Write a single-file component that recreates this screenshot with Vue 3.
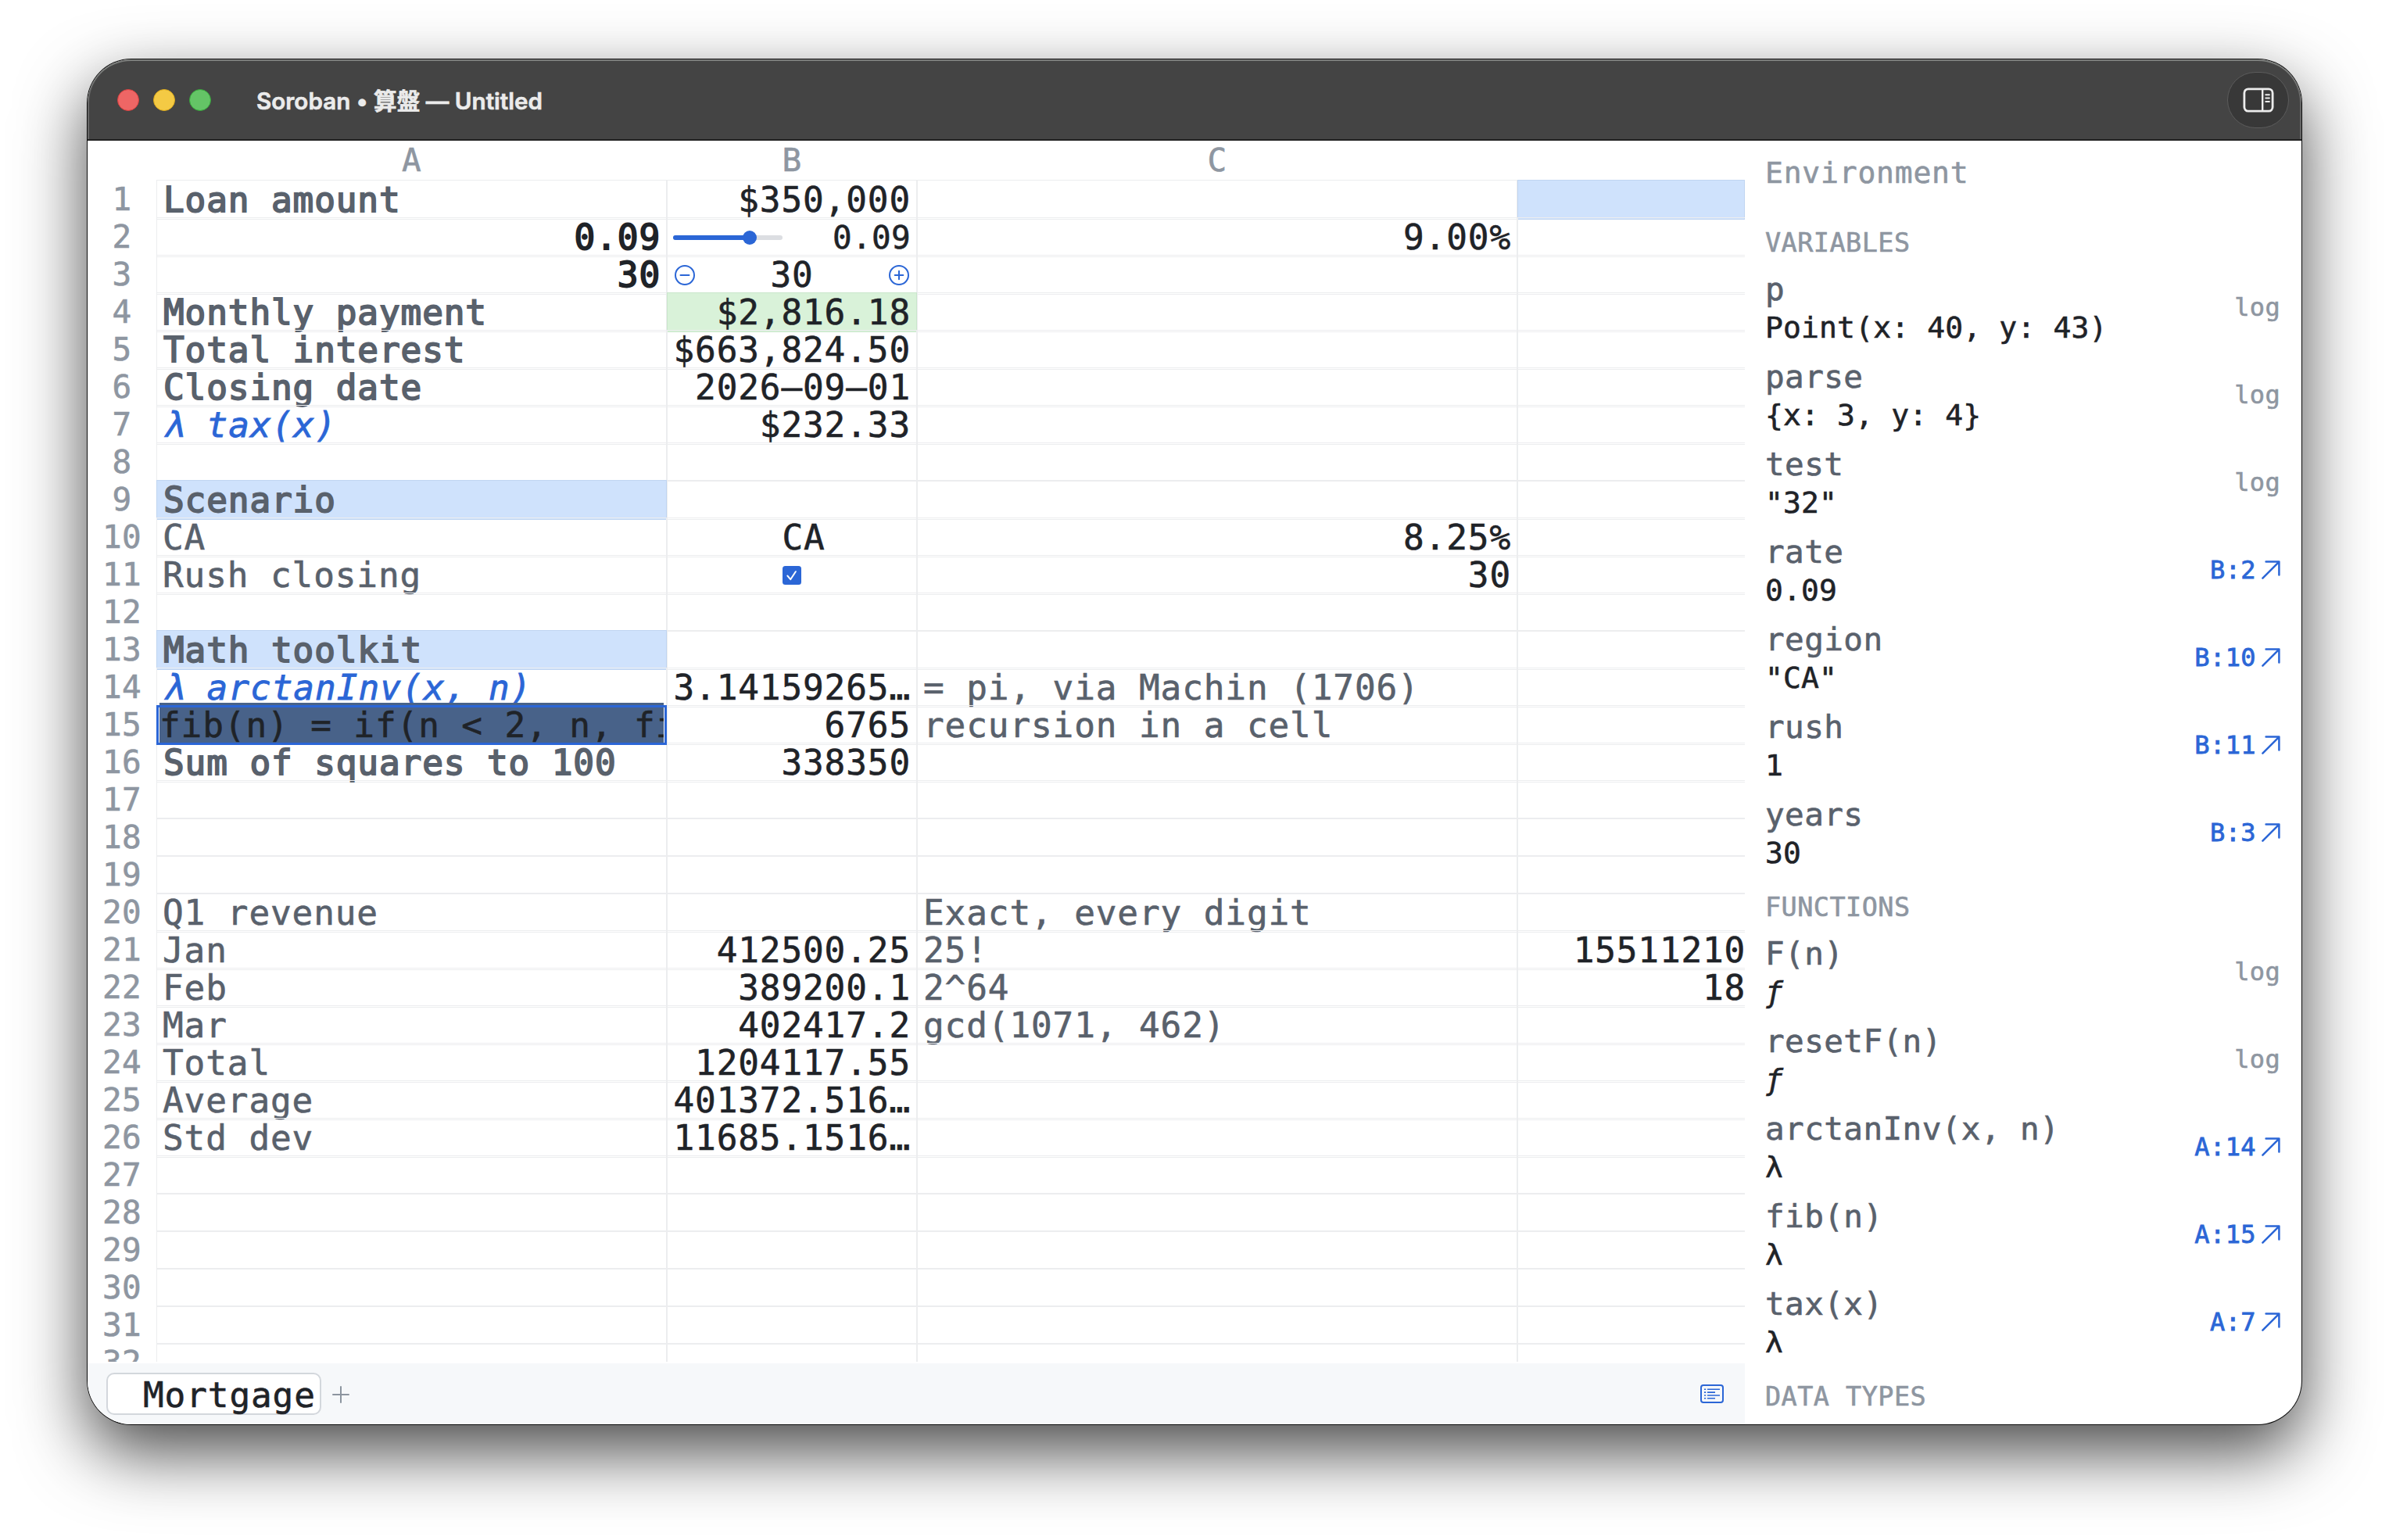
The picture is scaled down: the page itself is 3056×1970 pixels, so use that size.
<script setup>
const columns = ['A', 'B', 'C', 'D']
const headings = ['A', 'B', 'C']

const t = (text, ...mods) => ({ text, mods })

const content = {
  1: { A: t('Loan amount', 'label', 'strong'), B: t('$350,000', 'num'), D: t('', 'blue') },
  2: { A: t('0.09', 'num', 'strong'), B: { kind: 'slider', text: '0.09', value: 70, mods: [] }, C: t('9.00%', 'num') },
  3: { A: t('30', 'num', 'strong'), B: { kind: 'stepper', text: '30', mods: [] } },
  4: { A: t('Monthly payment', 'label', 'strong'), B: t('$2,816.18', 'num', 'green') },
  5: { A: t('Total interest', 'label', 'strong'), B: t('$663,824.50', 'num') },
  6: { A: t('Closing date', 'label', 'strong'), B: t('2026–09–01', 'num') },
  7: { A: t('λ tax(x)', 'lambda'), B: t('$232.33', 'num') },
  9: { A: t('Scenario', 'label', 'strong', 'blue') },
  10: { A: t('CA', 'label'), B: t('CA', 'choice'), C: t('8.25%', 'num') },
  11: { A: t('Rush closing', 'label'), B: { kind: 'checkbox', text: '', mods: [] }, C: t('30', 'num') },
  13: { A: t('Math toolkit', 'label', 'strong', 'blue') },
  14: { A: t('λ arctanInv(x, n)', 'lambda'), B: t('3.14159265…', 'num'), C: t('= pi, via Machin (1706)', 'label') },
  15: { A: { kind: 'editor', text: 'fib(n) = if(n < 2, n, fi', mods: [] }, B: t('6765', 'num'), C: t('recursion in a cell', 'label') },
  16: { A: t('Sum of squares to 100', 'label', 'strong'), B: t('338350', 'num') },
  20: { A: t('Q1 revenue', 'label'), C: t('Exact, every digit', 'label') },
  21: { A: t('Jan', 'label'), B: t('412500.25', 'num'), C: t('25!', 'label'), D: t('15511210', 'num') },
  22: { A: t('Feb', 'label'), B: t('389200.1', 'num'), C: t('2^64', 'label'), D: t('18', 'num') },
  23: { A: t('Mar', 'label'), B: t('402417.2', 'num'), C: t('gcd(1071, 462)', 'label') },
  24: { A: t('Total', 'label'), B: t('1204117.55', 'num') },
  25: { A: t('Average', 'label'), B: t('401372.516…', 'num') },
  26: { A: t('Std dev', 'label'), B: t('11685.1516…', 'num') },
}

const empty = { text: '', mods: [] }
const rows = Array.from({ length: 32 }, (_, i) => ({
  n: i + 1,
  cells: columns.map((c) => content[i + 1]?.[c] ?? empty),
}))

const sections = [
  {
    title: 'VARIABLES',
    items: [
      { name: 'p', value: 'Point(x: 40, y: 43)' },
      { name: 'parse', value: '{x: 3, y: 4}' },
      { name: 'test', value: '"32"' },
      { name: 'rate', value: '0.09', link: 'B:2' },
      { name: 'region', value: '"CA"', link: 'B:10' },
      { name: 'rush', value: '1', link: 'B:11' },
      { name: 'years', value: '30', link: 'B:3' },
    ],
  },
  {
    title: 'FUNCTIONS',
    items: [
      { name: 'F(n)', value: 'ƒ', builtin: true },
      { name: 'resetF(n)', value: 'ƒ', builtin: true },
      { name: 'arctanInv(x, n)', value: 'λ', link: 'A:14' },
      { name: 'fib(n)', value: 'λ', link: 'A:15' },
      { name: 'tax(x)', value: 'λ', link: 'A:7' },
    ],
  },
  { title: 'DATA TYPES', items: [] },
]
</script>

<template>
  <div class="desktop">
    <div class="window">
      <header class="titlebar">
        <div class="lights">
          <span class="light close"></span>
          <span class="light minimize"></span>
          <span class="light zoom"></span>
        </div>
        <h1 class="title">Soroban&nbsp;• 算盤 — Untitled</h1>
        <button class="toggle" aria-label="Toggle sidebar">
          <svg width="40" height="32" viewBox="0 0 40 32" fill="none" stroke="#ececec">
            <rect x="1.9" y="1.9" width="36.2" height="28.2" rx="5" stroke-width="2.8" />
            <path d="M25.2 2v28" stroke-width="2.4" />
            <path d="M29.3 9.2h4.6M29.3 13.6h4.6M29.3 18h4.6" stroke-width="2" stroke-linecap="round" />
          </svg>
        </button>
      </header>

      <div class="body">
        <main class="main">
          <div class="sheet">
            <div class="row head">
              <span class="corner"></span>
              <span v-for="c in headings" :key="c" class="colname">{{ c }}</span>
            </div>
            <div v-for="r in rows" :key="r.n" class="row">
              <span class="rownum">{{ r.n }}</span>
              <div v-for="(cell, i) in r.cells" :key="i" class="cell" :class="[cell.kind, ...cell.mods, { last: i === 3 }]">
                <template v-if="cell.kind === 'slider'">
                  <span class="track">
                    <span class="fill" :style="{ width: cell.value + '%' }"></span>
                    <span class="knob" :style="{ left: cell.value + '%' }"></span>
                  </span>
                  <span class="small">{{ cell.text }}</span>
                </template>
                <template v-else-if="cell.kind === 'stepper'">
                  <svg width="26" height="26" viewBox="0 0 26 26" fill="none" stroke="#2b66d6" stroke-width="2">
                    <circle cx="13" cy="13" r="12" />
                    <path d="M7.5 13h11" stroke-linecap="round" />
                  </svg>
                  <span>{{ cell.text }}</span>
                  <svg width="26" height="26" viewBox="0 0 26 26" fill="none" stroke="#2b66d6" stroke-width="2">
                    <circle cx="13" cy="13" r="12" />
                    <path d="M7.7 13h10.6M13 7.7v10.6" stroke-linecap="round" />
                  </svg>
                </template>
                <svg v-else-if="cell.kind === 'checkbox'" width="24" height="24" viewBox="0 0 24 24">
                  <rect width="24" height="24" rx="3.5" fill="#2b66d6" />
                  <path d="M6.4 12.6l3.8 4.6 6.6-10" fill="none" stroke="#fff" stroke-width="2" stroke-linecap="round" stroke-linejoin="round" />
                </svg>
                <span v-else-if="cell.kind === 'editor'" class="field">{{ cell.text }}</span>
                <template v-else>{{ cell.text }}</template>
              </div>
            </div>
          </div>

          <footer class="tabs">
            <div class="tab">Mortgage</div>
            <svg class="add" width="22" height="22" viewBox="0 0 22 22" stroke="#8c959f" stroke-width="2" stroke-linecap="round">
              <path d="M1 11h20M11 1v20" />
            </svg>
            <svg class="log-icon" width="30" height="24" viewBox="0 0 30 24" fill="none" stroke="#2b66d6">
              <rect x="1" y="1" width="28" height="22" rx="3" stroke-width="2" />
              <path d="M9 6.3h16M9 10.1h10M9 14h16M9 17.8h10" stroke-width="1.6" />
              <path d="M5 6.3h2.2M5 10.1h2.2M5 14h2.2M5 17.8h2.2" stroke-width="1.6" />
            </svg>
          </footer>
        </main>

        <aside class="panel">
          <h2 class="panel-title">Environment</h2>
          <section v-for="s in sections" :key="s.title" class="section">
            <h3 class="section-title">{{ s.title }}</h3>
            <div v-for="item in s.items" :key="item.name" class="item">
              <div class="entry">
                <div class="name">{{ item.name }}</div>
                <div class="value" :class="{ builtin: item.builtin }">{{ item.value }}</div>
              </div>
              <a v-if="item.link" class="link">
                {{ item.link }}
                <svg width="24" height="24" viewBox="0 0 24 24" fill="none" stroke="#2b66d6" stroke-width="2.5" stroke-linecap="round" stroke-linejoin="round">
                  <path d="M1.4 22.6L22.4 1.6M5.6 1.6h16.8v16.8" />
                </svg>
              </a>
              <span v-else class="log">log</span>
            </div>
          </section>
        </aside>
      </div>
    </div>
  </div>
</template>

<style>
body {
  background: #fff;
}
</style>

<style scoped>
.desktop {
  box-sizing: border-box;
  width: 3056px;
  height: 1970px;
  padding: 76px 112px 148px;
  overflow: hidden;
  background: #fff;
  font-family: "DejaVu Sans Mono", "Liberation Mono", monospace;
  -webkit-text-stroke: 0.6px currentColor;
}
.window {
  height: 1746px;
  display: flex;
  flex-direction: column;
  border-radius: 56px;
  overflow: hidden;
  background: #fff;
  box-shadow: 0 0 0 1px #0c0c0c, 0 35px 88px rgba(0, 0, 0, 0.72);
}
.titlebar {
  box-sizing: border-box;
  height: 104px;
  flex: none;
  display: flex;
  align-items: center;
  padding: 0 16px 0 38px;
  background: #444;
  border-bottom: 2px solid #222;
  border-radius: 56px 56px 0 0;
  box-shadow: inset 0 2px 0 #7c7e7c, inset 2px 0 0 #666, inset -2px 0 0 #666;
}
.lights {
  display: flex;
  gap: 18px;
  padding-top: 2px;
}
.light {
  box-sizing: border-box;
  width: 28px;
  height: 28px;
  border-radius: 50%;
}
.close {
  background: #ee6665;
  border: 1px solid #d8403f;
}
.minimize {
  background: #f4ca44;
  border: 1px solid #dba91c;
}
.zoom {
  background: #64c466;
  border: 1px solid #35a53a;
}
.title {
  margin: 0 auto 0 58px;
  padding-top: 3px;
  font: 600 29.6px/40px Inter, "Noto Sans CJK JP", sans-serif;
  color: #ebebeb;
  white-space: nowrap;
}
.toggle {
  box-sizing: border-box;
  width: 79px;
  height: 72px;
  padding: 0;
  margin-top: 2px;
  display: flex;
  align-items: center;
  justify-content: center;
  border: 1.5px solid #5c5c5c;
  border-radius: 36px;
  background: #383838;
}
.body {
  flex: 1;
  min-height: 0;
  display: flex;
}
.main {
  width: 2120px;
  flex: none;
  display: flex;
  flex-direction: column;
}
.sheet {
  height: 1562px;
  margin-bottom: 2px;
  overflow: hidden;
}
.row {
  display: grid;
  grid-template-columns: 88px 653px 320px 768px 291px;
  height: 48px;
}
.head {
  height: 50px;
}
.colname,
.rownum {
  font-size: 41px;
  line-height: 50px;
  letter-spacing: 0.3px;
  text-align: center;
  color: #8e96a1;
}
.cell {
  padding: 0 8px;
  font-size: 44.4px;
  line-height: 51px;
  letter-spacing: 0.87px;
  white-space: pre;
  color: #1f2328;
  box-shadow: inset 0 0 0 1px #ecedef;
}
.label {
  color: #59616c;
}
.strong {
  -webkit-text-stroke: 1.8px currentColor;
}
.label.strong {
  padding-left: 9px;
}
.num {
  text-align: right;
}
.last {
  padding-right: 0;
  box-shadow: inset 1px 1px 0 #ecedef, inset 0 -1px 0 #ecedef;
}
.last.num {
  margin-right: -1px;
  letter-spacing: 0.8px;
}
.lambda {
  padding-left: 9px;
  font-style: italic;
  letter-spacing: 1px;
  color: #2b66d6;
  -webkit-text-stroke: 0.8px currentColor;
}
.blue {
  background: #cfe2fc;
  box-shadow: inset 0 0 0 1px #c0d5f1;
}
.green {
  background: #d9f2d9;
  box-shadow: inset 0 0 0 1px #c9e6cb;
}
.choice {
  text-align: center;
  padding-left: 38px;
}
.slider,
.stepper {
  display: flex;
  align-items: center;
  justify-content: space-between;
}
.track {
  position: relative;
  width: 140px;
  height: 6px;
  border-radius: 3px;
  background: #dcdee2;
}
.fill {
  display: block;
  height: 6px;
  border-radius: 3px;
  background: #2b66d6;
}
.knob {
  position: absolute;
  top: -6px;
  width: 18px;
  height: 18px;
  margin-left: -9px;
  border-radius: 50%;
  background: #2b66d6;
}
.small {
  font-size: 41px;
  line-height: 48px;
  letter-spacing: 0.3px;
}
.stepper {
  padding: 0 10px;
}
.checkbox {
  display: flex;
  align-items: center;
  justify-content: center;
}
.editor {
  position: relative;
  padding: 0 4px;
}
.editor::after {
  content: "";
  position: absolute;
  inset: 0;
  border: 3px solid #2b66d6;
}
.field {
  display: block;
  height: 54px;
  margin-top: -3px;
  line-height: 57px;
  overflow: hidden;
  background: #486289;
}
.tabs {
  box-sizing: border-box;
  height: 78px;
  display: flex;
  align-items: center;
  padding: 0 27px 0 24px;
  background: #f6f8fa;
}
.tab {
  box-sizing: border-box;
  width: 275px;
  height: 54px;
  padding-left: 45px;
  border: 2px solid #d3d7dc;
  border-radius: 10px;
  background: #fff;
  font-size: 44.4px;
  line-height: 53px;
  letter-spacing: 0.87px;
  color: #1f2328;
}
.add {
  margin: 1px auto 0 14px;
}
.panel {
  flex: 1;
  padding: 16px 27px 0 26px;
  overflow: hidden;
}
.panel-title {
  margin: 0 0 25px;
  font-size: 38px;
  font-weight: 400;
  line-height: 50px;
  letter-spacing: 0.8px;
  color: #8e96a1;
}
.section-title {
  margin: 0;
  padding: 20px 0 6px;
  font-size: 33.5px;
  font-weight: 400;
  line-height: 40px;
  letter-spacing: 0.45px;
  color: #8e96a1;
}
.item {
  box-sizing: border-box;
  height: 112px;
  display: flex;
  justify-content: space-between;
  align-items: center;
}
.entry {
  display: flex;
  flex-direction: column;
  gap: 1px;
  padding-top: 3px;
}
.name {
  font-size: 41px;
  line-height: 48px;
  letter-spacing: 0.4px;
  color: #59616c;
}
.value {
  font-size: 38px;
  line-height: 48px;
  letter-spacing: 0.15px;
  color: #1f2328;
}
.builtin {
  font-style: italic;
}
.link {
  display: flex;
  align-items: center;
  gap: 7px;
  font-size: 32px;
  line-height: 40px;
  letter-spacing: 0.4px;
  color: #2b66d6;
  -webkit-text-stroke: 0.8px currentColor;
}
.log {
  font-size: 32px;
  line-height: 40px;
  letter-spacing: 0.3px;
  color: #8e96a1;
}
</style>
